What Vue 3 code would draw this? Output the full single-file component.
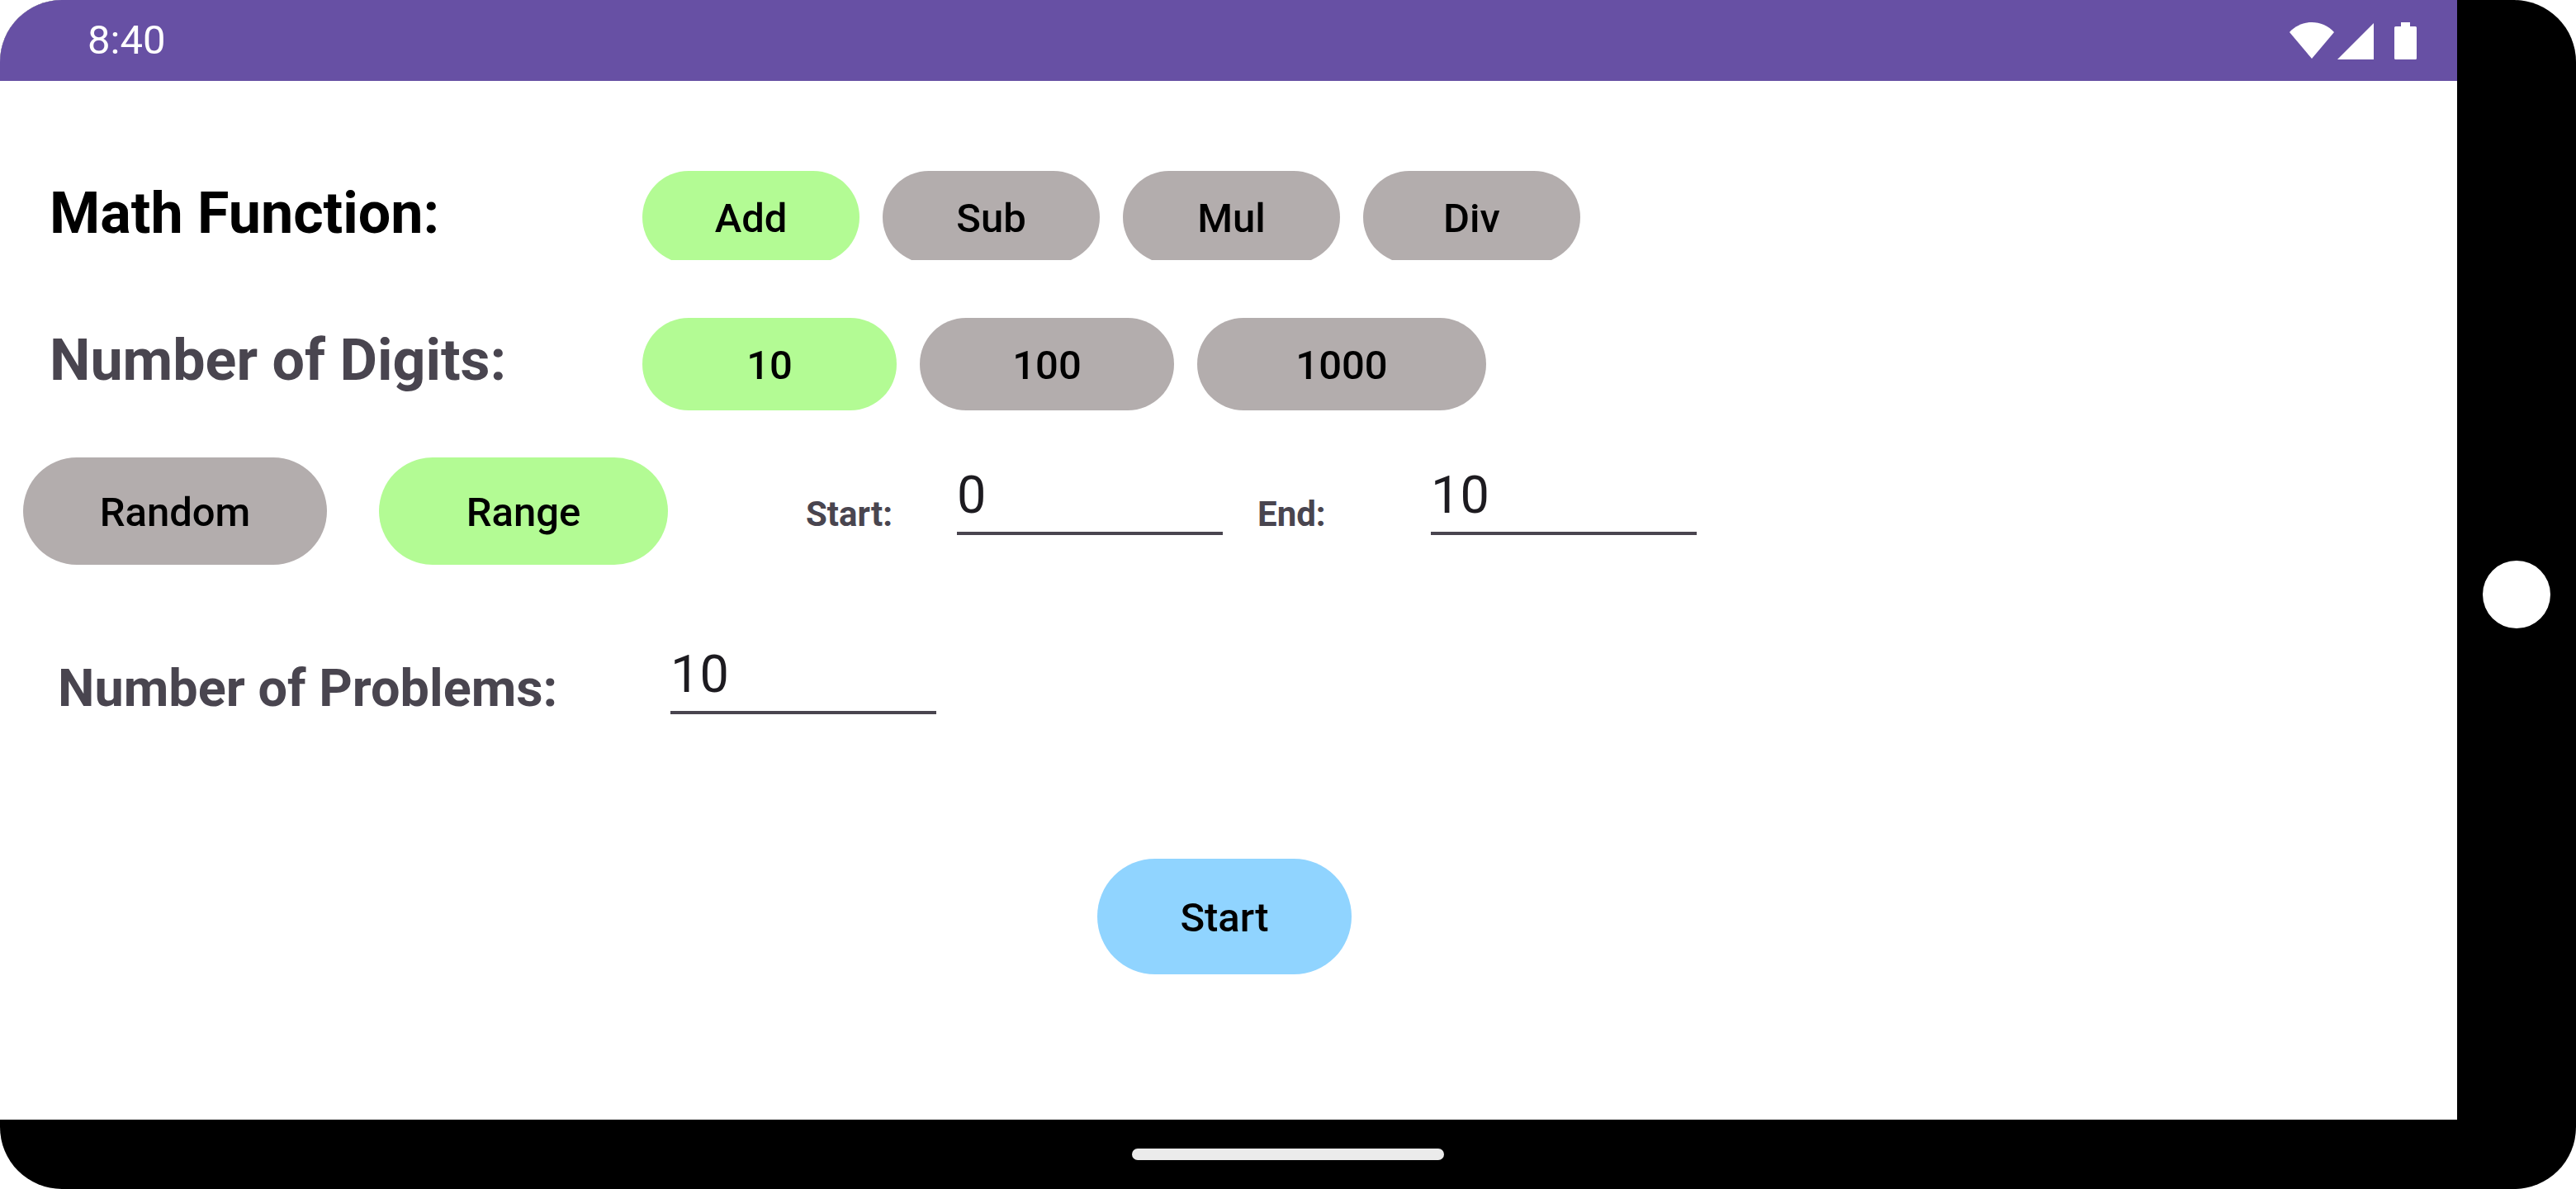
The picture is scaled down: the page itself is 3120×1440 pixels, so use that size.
<script setup>
import { ref } from 'vue'

const operations = ['Add', 'Sub', 'Mul', 'Div']
const digits = [
  { value: '10', size: 'medium' },
  { value: '100', size: 'medium' },
  { value: '1000', size: 'large' },
]

const operation = ref('Add')
const digit = ref('10')
const mode = ref('Range')
const rangeStart = ref('0')
const rangeEnd = ref('10')
const problems = ref('10')
</script>

<template>
  <div class="device">
    <div class="screen">
      <header class="status-bar">
        <time class="clock">8:40</time>
        <div class="status-icons">
          <svg class="wifi" viewBox="0 0 54 46" aria-hidden="true">
            <path d="M27 45 0 13C7 5 17 1 27 1s20 4 27 12Z" />
          </svg>
          <svg class="signal" viewBox="0 0 44 46" aria-hidden="true">
            <path d="M44 2v44H0Z" />
          </svg>
          <svg class="battery" viewBox="0 0 27 46" aria-hidden="true">
            <path d="M8 1h11v5h6.500q1.500 0 1.500 1.500v37q0 1.500-1.500 1.500h-24Q0 46 0 44.500v-37Q0 6 1.500 6H8Z" />
          </svg>
        </div>
      </header>

      <main class="content">
        <section class="row function-row">
          <h2 class="title strong">Math Function:</h2>
          <div class="choices">
            <button
              v-for="name in operations"
              :key="name"
              type="button"
              class="pill small"
              :class="{ selected: operation === name }"
              @click="operation = name"
            >{{ name }}</button>
          </div>
        </section>

        <section class="row digits-row">
          <h2 class="title">Number of Digits:</h2>
          <div class="choices">
            <button
              v-for="d in digits"
              :key="d.value"
              type="button"
              class="pill"
              :class="[d.size, { selected: digit === d.value }]"
              @click="digit = d.value"
            >{{ d.value }}</button>
          </div>
        </section>

        <section class="row range-row">
          <button
            type="button"
            class="pill tall wide"
            :class="{ selected: mode === 'Random' }"
            @click="mode = 'Random'"
          >Random</button>
          <button
            type="button"
            class="pill tall large"
            :class="{ selected: mode === 'Range' }"
            @click="mode = 'Range'"
          >Range</button>
          <div class="range-fields">
            <label class="caption start-caption" for="range-start">Start:</label>
            <input id="range-start" v-model="rangeStart" class="field" type="text" />
            <label class="caption end-caption" for="range-end">End:</label>
            <input id="range-end" v-model="rangeEnd" class="field" type="text" />
          </div>
        </section>

        <section class="row problems-row">
          <label class="problems-label" for="problems">Number of Problems:</label>
          <input id="problems" v-model="problems" class="field" type="text" />
        </section>

        <div class="actions">
          <button type="button" class="pill medium start">Start</button>
        </div>
      </main>
    </div>

    <aside class="side-bar">
      <span class="camera"></span>
    </aside>
    <nav class="gesture-bar">
      <span class="handle"></span>
    </nav>
  </div>
</template>

<style>
body {
  margin: 0;
  background: #ffffff;
}
</style>

<style scoped>
.device {
  display: grid;
  grid-template-columns: 1fr 144px;
  grid-template-rows: 1fr 84px;
  min-height: 100vh;
  border-radius: 75px;
  overflow: hidden;
  background: #000000;
  font-family: Roboto, "Liberation Sans", sans-serif;
}

.screen {
  grid-column: 1;
  grid-row: 1;
  background: #ffffff;
}

.status-bar {
  display: flex;
  align-items: center;
  justify-content: space-between;
  height: 98px;
  padding: 0 49px 0 106px;
  box-sizing: border-box;
  background: #6750a4;
  color: #ffffff;
}

.clock {
  font-size: 49px;
  line-height: 58px;
}

.status-icons {
  display: flex;
}

.status-icons svg {
  height: 46px;
  fill: #ffffff;
}

.wifi {
  width: 54px;
}

.signal {
  width: 44px;
  margin: 0 25px 0 4px;
}

.battery {
  width: 27px;
}

.content {
  padding-top: 109px;
}

.row {
  display: flex;
}

.function-row,
.digits-row {
  align-items: flex-start;
  padding-left: 60px;
}

.function-row {
  height: 108px;
  margin-bottom: 70px;
  overflow: hidden;
}

.digits-row {
  margin-bottom: 57px;
}

.title {
  flex: none;
  width: 718px;
  margin: 0;
  font-size: 70px;
  font-weight: 700;
  line-height: 102px;
  color: #49454f;
}

.title.strong {
  color: #000000;
}

.choices {
  display: flex;
  gap: 28px;
}

.pill {
  flex: none;
  height: 112px;
  padding: 4px 0 0;
  box-sizing: border-box;
  border: 0;
  border-radius: 70px;
  background: #b3adad;
  color: #000000;
  font-family: inherit;
  font-size: 49px;
  font-weight: 500;
  line-height: 58px;
  cursor: pointer;
}

.pill.small {
  width: 263px;
}

.pill.medium {
  width: 308px;
}

.pill.large {
  width: 350px;
}

.pill.wide {
  width: 368px;
}

.pill.tall {
  height: 130px;
}

.pill.selected {
  background: #b3fb94;
}

.pill.start {
  height: 140px;
  background: #90d4ff;
}

.range-row {
  align-items: center;
  gap: 63px;
  height: 130px;
  padding-left: 28px;
  margin-bottom: 95px;
}

.range-fields {
  display: flex;
  align-items: center;
  margin-left: 104px;
}

.caption {
  padding-top: 8px;
  font-size: 42px;
  font-weight: 700;
  line-height: 50px;
  color: #49454f;
}

.start-caption {
  width: 183px;
}

.end-caption {
  width: 210px;
  margin-left: 42px;
}

.field {
  width: 322px;
  height: 86px;
  margin: 0 0 28px;
  padding: 0 0 8px;
  box-sizing: border-box;
  border: 0;
  border-bottom: 4px solid #49454f;
  border-radius: 0;
  outline: none;
  background: transparent;
  color: #1d1b20;
  font-family: inherit;
  font-size: 63px;
  line-height: 74px;
}

.problems-row {
  align-items: center;
  padding-left: 70px;
  margin-bottom: 147px;
}

.problems-label {
  width: 742px;
  padding-bottom: 4px;
  font-size: 63px;
  font-weight: 700;
  line-height: 74px;
  color: #49454f;
}

.actions {
  display: flex;
  justify-content: center;
  padding-right: 10px;
}

.side-bar {
  grid-column: 2;
  grid-row: 1 / -1;
  display: flex;
  align-items: center;
  justify-content: center;
}

.camera {
  width: 82px;
  height: 82px;
  border-radius: 50%;
  background: #ffffff;
}

.gesture-bar {
  grid-column: 1 / -1;
  grid-row: 2;
  display: flex;
  align-items: center;
  justify-content: center;
}

.handle {
  width: 378px;
  height: 14px;
  border-radius: 7px;
  background: #ebebeb;
}
</style>
